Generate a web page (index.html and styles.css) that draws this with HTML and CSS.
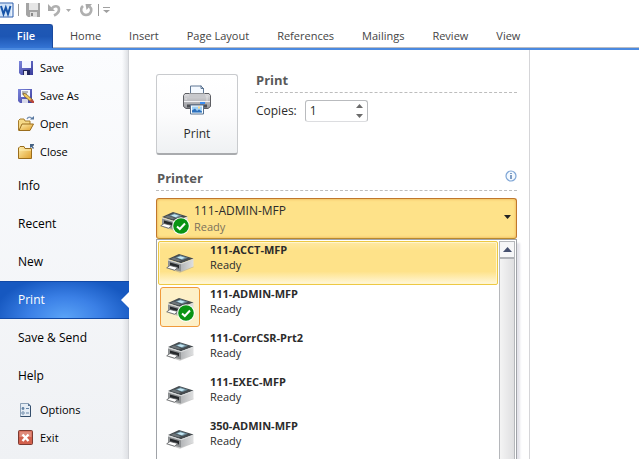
FILE: index.html
```html
<!DOCTYPE html>
<html lang="en">
<head>
<meta charset="utf-8">
<title>Print</title>
<link rel="stylesheet" href="styles.css">
</head>
<body>
<svg class="defs" aria-hidden="true">
  <defs>
    <linearGradient id="gold" x1="0" y1="0" x2="1" y2="1"><stop offset="0" stop-color="#fff0b0"/><stop offset="1" stop-color="#e0a02c"/></linearGradient>
    <linearGradient id="violet" x1="0" y1="0" x2="1" y2="1"><stop offset="0" stop-color="#7c86dc"/><stop offset="1" stop-color="#3a3c9c"/></linearGradient>
    <linearGradient id="side" x1="0" y1="0" x2="1" y2="0"><stop offset="0" stop-color="#b4b6b8"/><stop offset="1" stop-color="#dfe0e1"/></linearGradient>
    <linearGradient id="steel" x1="0" y1="0" x2="0" y2="1"><stop offset="0" stop-color="#dcdcdf"/><stop offset="1" stop-color="#96979c"/></linearGradient>
    <symbol id="device" viewBox="0 0 28 20">
      <path d="M3 16L14 19.800L28 14L25 12L5 12Z" fill="#999" opacity=".5"/>
      <path d="M2 7L15 10.500V18.500L9 17L2 13Z" fill="#8d9092"/>
      <path d="M15 10.500L27.500 6.500V13.500L15 18.500Z" fill="url(#side)"/>
      <path d="M2 6L13 1L27.500 5.500L15 10.200Z" fill="#454b4f"/>
      <path d="M4.500 6L8 4.400L15 7.200L12.500 8.300Z" fill="#6f767a"/>
      <path d="M9 4.500L14.500 2.300L22 4.800L16.500 7Z" fill="#6b8a98"/>
      <path d="M11 4.600L14.500 3.200L19 4.700L15.500 6.200Z" fill="#c3e6f3"/>
      <path d="M4 9.500L13 12V15.500L4 13Z" fill="#26292c"/>
      <path d="M.7 14.800L4 12.500L12 14.500L8.500 17.200Z" fill="#fff" stroke="#55585a" stroke-width=".8"/>
      <path d="M2 7L15 10.800L27.500 6.300" fill="none" stroke="#d8dadb" stroke-width="1"/>
    </symbol>
    <symbol id="check" viewBox="0 0 18 18">
      <circle cx="9" cy="9" r="8.800" fill="#fff"/><circle cx="9" cy="9" r="7.800" fill="#0a9414"/>
      <path d="M5 9.500L7.800 12L13 6.500" fill="none" stroke="#fff" stroke-width="2"/>
    </symbol>
  </defs>
</svg>

<header class="ribbon">
  <div class="quick">
    <svg class="word" viewBox="0 0 14 16" aria-hidden="true"><path d="M0 1H13V15H0" fill="#e9f2fc" stroke="#2a5cad"/><path d="M0 2H11V14H0Z" fill="#cfe2f8"/><path d="M1 4L3.500 12L5.800 5.500L8 12L10.500 4" fill="none" stroke="#1653a8" stroke-width="2"/></svg>
    <span class="rule"></span>
    <button class="tool save" aria-label="Save"><svg viewBox="0 0 14 14"><path d="M0 0H14V14H2L0 12Z" fill="#a4a4a4"/><path d="M3 0H12V7H3Z" fill="#e6e6e6"/><path d="M4 9H11V14H4Z" fill="#dedede"/><path d="M5 10H7V13H5Z" fill="#888"/></svg></button>
    <button class="tool undo" aria-label="Undo"><svg viewBox="0 0 14 14"><path d="M0 1V8H7Z" fill="#a9a9a9"/><path d="M3.500 6C6 2 11 2.500 11 6.500C11 9 9 11 6 12.500" fill="none" stroke="#b0b0b0" stroke-width="2.600"/></svg></button>
    <button class="tool more" aria-label="Undo history"><svg viewBox="0 0 5 3"><path d="M0 0H5L2.500 3Z" fill="#aaa"/></svg></button>
    <button class="tool redo" aria-label="Repeat"><svg viewBox="0 0 14 14"><path d="M3 3C-.5 6 1.500 12 6 12C11.500 12 12.500 6 9.500 3.500" fill="none" stroke="#b0b0b0" stroke-width="2.600"/><path d="M5.500 1H12L6.500 7Z" fill="#a9a9a9"/></svg></button>
    <span class="rule"></span>
    <button class="tool customize" aria-label="Customize toolbar"><svg viewBox="0 0 7 6"><path d="M0 0H7V1H0ZM0 3H7L3.500 6Z" fill="#a0a0a0"/></svg></button>
  </div>
  <nav class="tabs" aria-label="Ribbon">
    <a class="tab file" href="#file">File</a>
    <a class="tab" href="#home">Home</a>
    <a class="tab" href="#insert">Insert</a>
    <a class="tab" href="#layout">Page Layout</a>
    <a class="tab" href="#references">References</a>
    <a class="tab" href="#mailings">Mailings</a>
    <a class="tab" href="#review">Review</a>
    <a class="tab" href="#view">View</a>
  </nav>
</header>

<div class="backstage">
  <nav class="side" aria-label="File">
    <a class="cmd" href="#save"><svg viewBox="0 0 16 16"><path d="M1 1H15V15H3L1 13Z" fill="url(#violet)"/><path d="M4 1H13V8H4Z" fill="#f4f7ff"/><path d="M5 10H12V15H5Z" fill="#23265c"/><path d="M6 11H9V15H6Z" fill="#e8e8f0"/></svg>Save</a>
    <a class="cmd" href="#saveas"><svg viewBox="0 0 16 16"><path d="M0 1H14V15H2L0 13Z" fill="url(#violet)"/><path d="M3 2H12V9H3Z" fill="#f4f7ff"/><path d="M4 4H10M4 6H9" stroke="#777"/><path d="M4 11H10V15H4Z" fill="#d8daea"/><path d="M5 5L8 6L15 12L13 14L6 8Z" fill="#efc75b" stroke="#75592a" stroke-width=".7"/><path d="M13 11L16 13V15H14L12 13Z" fill="#b8473c"/></svg>Save As</a>
    <a class="cmd" href="#open"><svg viewBox="0 0 16 16"><path d="M.5 14.500V4.500L2 3H6L7 5H12V8" fill="#f5d987" stroke="#a67c2c"/><path d="M1 14.500L4 8H15.500L12 14.500Z" fill="url(#gold)" stroke="#9a6d1d"/><path d="M9 3C10 .5 13 .5 14 3" fill="none" stroke="#7792b5" stroke-width="1.200"/><path d="M12 3.500H16V0Z" fill="#56779f"/></svg>Open</a>
    <a class="cmd" href="#close"><svg viewBox="0 0 16 16"><path d="M.5 14.500V4L2 2.500H6L7 4.500H13.500V14.500Z" fill="url(#gold)" stroke="#9a6d1d"/><path d="M1 6H13" stroke="#fff0b4"/><path d="M12 0H16V1.500L14.500 2L16 4L15 5L13.500 3L12 4Z" fill="#466384"/></svg>Close</a>
    <a class="place first" href="#info">Info</a>
    <a class="place" href="#recent">Recent</a>
    <a class="place" href="#new">New</a>
    <a class="place current" href="#print" aria-current="page">Print</a>
    <a class="place" href="#send">Save &amp; Send</a>
    <a class="place last" href="#help">Help</a>
    <a class="cmd" href="#options"><svg viewBox="0 0 16 16"><path d="M2.500 1.500H10L12.500 4V14.500H2.500Z" fill="#e5edf5" stroke="#8ba0b6"/><path d="M12.500 4V14.500H2.500" fill="none" stroke="#344e6c"/><path d="M10 1V4H13Z" fill="#55718f"/><circle cx="5" cy="6.500" r="1.400" fill="#6484a6"/><circle cx="5" cy="11" r="1.200" fill="#fff" stroke="#6484a6"/><path d="M8 6.500H11M8 11H11" stroke="#6484a6"/></svg>Options</a>
    <a class="cmd" href="#exit"><svg viewBox="0 0 16 16"><rect x=".5" y=".5" width="14" height="14" rx="1" fill="#d2604c" stroke="#7c3a31"/><path d="M1.500 1.500H13.500V7H1.500Z" fill="#df8b7b"/><path d="M4.500 4.500L10.500 11M10.500 4.500L4.500 11" stroke="#fff" stroke-width="2.400"/></svg>Exit</a>
  </nav>

  <main class="settings">
    <section class="top">
      <button class="print">
        <svg viewBox="0 0 30 30" aria-hidden="true"><path d="M8.500 11V1.500H19L21.500 4V11Z" fill="#f4f9ff" stroke="#5f7794"/><path d="M19 1V4H22" fill="none" stroke="#5f7794"/><path d="M3 9H27L28.500 11V22L26 24H4L1.500 22V11Z" fill="url(#steel)" stroke="#5d5e63"/><path d="M7 9H23V13H7Z" fill="#c7c8cc"/><path d="M2 17H28" stroke="#f1f1f3"/><path d="M5 20H25V23H5Z" fill="#4e5055"/><path d="M18 18.500H23" stroke="#3b8cf0" stroke-width="2"/><path d="M25 12V17M4 14V16" stroke="#fff" stroke-dasharray="1 1"/><path d="M8.500 20.500H21.500V29.500H8.500Z" fill="#fff" stroke="#56708f"/><path d="M10 22H20V28H10Z" fill="#9fd0f5"/><path d="M10 28V26L13 24L15 26.500L17 25L20 27V28Z" fill="#2d70bd"/><path d="M16 22H18V24H16Z" fill="#ffd98b"/></svg>
        Print
      </button>
      <div class="job">
        <h2>Print</h2>
        <div class="copies">
          <label for="copies">Copies:</label>
          <div class="spin">
            <input id="copies" type="number" min="1" value="1">
            <div class="arrows">
              <button aria-label="More copies"><svg viewBox="0 0 7 4"><path d="M0 4H7L3.500 0Z" fill="#6b6b6b"/></svg></button>
              <button aria-label="Fewer copies"><svg viewBox="0 0 7 4"><path d="M0 0H7L3.500 4Z" fill="#6b6b6b"/></svg></button>
            </div>
          </div>
        </div>
      </div>
    </section>

    <section>
      <h2 class="printer-title"><label for="printer">Printer</label>
        <button class="info" aria-label="Printer information"><svg viewBox="0 0 12 12"><circle cx="6" cy="6" r="5" fill="#f3f9ff" stroke="#7fa6d6" stroke-width="1.200"/><path d="M6 5V9M6 3V4" stroke="#35619c" stroke-width="1.200"/></svg></button>
      </h2>
      <div class="combo">
        <select id="printer">
          <option>111-ADMIN-MFP</option><option>111-ACCT-MFP</option><option>111-CorrCSR-Prt2</option><option>111-EXEC-MFP</option><option>350-ADMIN-MFP</option>
        </select>
        <div class="face">
          <span class="icon"><svg class="device"><use href="#device"/></svg><svg class="check"><use href="#check"/></svg></span>
          <span class="state">Ready</span>
          <svg class="caret" viewBox="0 0 7 4"><path d="M0 0H7L3.500 4Z" fill="#222"/></svg>
        </div>
      </div>
      <div class="menu">
        <ul class="list" role="listbox" aria-label="Printers">
          <li class="item hover" role="option"><span class="icon"><svg class="device"><use href="#device"/></svg></span><span class="text"><b>111-ACCT-MFP</b>Ready</span></li>
          <li class="item chosen" role="option" aria-selected="true"><span class="icon"><svg class="device"><use href="#device"/></svg><svg class="check"><use href="#check"/></svg></span><span class="text"><b>111-ADMIN-MFP</b>Ready</span></li>
          <li class="item" role="option"><span class="icon"><svg class="device"><use href="#device"/></svg></span><span class="text"><b>111-CorrCSR-Prt2</b>Ready</span></li>
          <li class="item" role="option"><span class="icon"><svg class="device"><use href="#device"/></svg></span><span class="text"><b>111-EXEC-MFP</b>Ready</span></li>
          <li class="item" role="option"><span class="icon"><svg class="device"><use href="#device"/></svg></span><span class="text"><b>350-ADMIN-MFP</b>Ready</span></li>
        </ul>
        <div class="scroll">
          <button aria-label="Scroll up"><svg viewBox="0 0 9 5"><path d="M0 5H9L4.500 0Z" fill="#46506f"/></svg></button>
          <div class="thumb"></div>
        </div>
      </div>
    </section>
  </main>
  <div class="preview"></div>
</div>
</body>
</html>
```
FILE: styles.css
```css
* { box-sizing: border-box; }

body {
  margin: 0;
  height: 100vh;
  overflow: hidden;
  display: flex;
  flex-direction: column;
  background: #fff;
  color: #2b2b2b;
  font: 12px/16px "Open Sans", "Noto Sans", sans-serif;
}

a { color: inherit; text-decoration: none; }
button, input, select { font: inherit; color: inherit; margin: 0; }
button { border: 0; padding: 0; background: none; }
svg { display: block; }
h2 { margin: 0; font-size: 13px; line-height: 16px; color: #5a5a5a; }
.defs { position: absolute; width: 0; height: 0; }

.quick { display: flex; align-items: center; height: 20px; }
.word { width: 14px; height: 16px; }
.rule { width: 1px; height: 12px; margin-left: 4px; background: #999; }
.tool svg { width: 14px; height: 14px; }
.save { margin-left: 7px; }
.undo { margin-left: 8px; }
.more { margin-left: 4px; }
.more svg { width: 5px; height: 3px; }
.redo { margin-left: 9px; }
.customize { margin-left: 4px; }
.customize svg { width: 7px; height: 6px; }

.tabs {
  display: flex;
  height: 30px;
  padding-top: 4px;
  border-bottom: 2px solid #4b8ae0;
  box-shadow: inset 0 -1px #b9bcc2;
}
.tab { padding: 0 14px; font-size: 11px; line-height: 24px; color: #444; }
.file {
  width: 53px;
  margin-right: 3px;
  padding: 0;
  text-align: center;
  color: #fff;
  font-weight: 600;
  border: 1px solid #1a4a9f;
  border-width: 1px 1px 0 0;
  border-radius: 0 3px 0 0;
  line-height: 22px;
  background: linear-gradient(#2058b4, #1d56b4 50%, #3474d4);
}

.backstage { flex: 1; min-height: 0; display: grid; grid-template-columns: 129px 401px 1fr; }

.side {
  padding-top: 4px;
  color: #000;
  background: linear-gradient(90deg, transparent 122px, #dfe1e5), linear-gradient(#fbfcfe, #eff1f4);
  border-right: 1px solid #cfd1d5;
}
.cmd { display: flex; align-items: center; gap: 6px; height: 28px; padding-left: 18px; font-size: 11px; }
.cmd svg { width: 16px; height: 16px; }
.place { display: flex; align-items: center; height: 38px; padding-left: 18px; }
.first { margin-top: 1px; }
.last { margin-bottom: 1px; }
.current {
  position: relative;
  margin-right: -1px;
  color: #fff;
  border: 1px solid #1149a6;
  border-width: 1px 0;
  background: radial-gradient(ellipse 72px 42px at 50% 100%, #5aa3f7, #3b80e6 50%, #1658c0);
}
.current::after {
  content: "";
  position: absolute;
  right: 0;
  top: 10px;
  border: 8px solid transparent;
  border-right-color: #fff;
  border-left: 0;
}

.settings { padding: 24px 12px 0 27px; border-right: 1px solid #d5d5d8; }
.top { display: flex; gap: 17px; }
.print {
  width: 82px;
  height: 81px;
  display: flex;
  flex-direction: column;
  align-items: center;
  gap: 11px;
  padding-top: 9px;
  border: 1px solid #c9cbce;
  border-bottom: 2px solid #a9abae;
  border-radius: 3px;
  background: linear-gradient(#fff, #fcfcfd 50%, #eff1f3);
}
.print svg { width: 30px; height: 31px; }
.job { flex: 1; }
.job h2, .printer-title { padding: 0 0 4px 1px; border-bottom: 1px dashed #bdbdbd; }
.job h2 { margin-top: -2px; }
.copies { display: flex; align-items: center; gap: 8px; margin-top: 7px; padding-left: 1px; }
.spin { display: flex; width: 63px; height: 22px; border: 1px solid #b9bbbe; border-bottom-color: #dcdde0; border-radius: 3px; background: #fff; }
.spin input { width: 44px; padding: 0 4px; border: 0; outline: 0; background: none; appearance: textfield; }
.spin input::-webkit-inner-spin-button { appearance: none; }
.arrows { display: flex; flex-direction: column; justify-content: center; gap: 6px; padding-left: 6px; }
.arrows svg { width: 7px; height: 4px; }

.printer-title { display: flex; align-items: flex-start; justify-content: space-between; margin-top: 15px; }
.info svg { width: 12px; height: 12px; }

.combo { display: grid; margin-top: 7px; }
.combo select, .face { grid-area: 1 / 1; }
.combo select {
  height: 41px;
  padding: 0 20px 16px 37px;
  appearance: none;
  border: 1px solid #c0772c;
  border-bottom-color: #b98a2f;
  border-radius: 3px;
  background: #fee289;
  box-shadow: inset 0 0 3px #e9a94b;
}
.face { display: flex; align-items: flex-end; padding: 0 6px 4px 4px; pointer-events: none; }
.icon { display: grid; flex: none; width: 40px; height: 40px; place-items: center; }
.icon svg { grid-area: 1 / 1; }
.device { width: 28px; height: 20px; }
.check { width: 18px; height: 18px; place-self: end; }
.face .icon { width: 30px; height: 24px; }
.face .device { place-self: start; }
.state { flex: 1; margin-left: 4px; font-size: 11px; color: #7c715b; }
.caret { width: 7px; height: 4px; align-self: center; }

.menu { display: flex; padding: 1px 1px 0; border: 1px solid #a0a3a8; border-bottom: 0; box-shadow: 3px 4px 2px #e4e3ea; background: #fff; }
.list { flex: 1; margin: 0; padding: 0; list-style: none; }
.item { display: flex; height: 44px; padding: 1px; gap: 10px; font-size: 11px; line-height: 15px; }
.item .icon { margin: 1px 0 0 1px; }
.text { display: flex; flex-direction: column; }
.text b { font-weight: 700; }
.hover { border: 1px solid #edc944; border-radius: 2px; padding: 0; background: linear-gradient(#fee9a4, #fee289 20%, #fee289 70%, #fff7da); box-shadow: inset 0 0 0 1px #fff5d0; }
.chosen .icon { border: 1px solid #f09a3c; border-radius: 3px; background: #fdf0c8; }
.chosen .check { margin: 0 4px 4px 0; }
.scroll { width: 16px; margin-left: 1px; display: flex; flex-direction: column; border: 1px solid #b5b7bb; background: #eee; }
.scroll button { height: 17px; display: grid; place-items: center; border-bottom: 2px solid #b0b2b7; background: #f6f6f7; }
.scroll svg { width: 9px; height: 5px; }
.thumb { flex: 1; background: linear-gradient(90deg, #f4f4f4, #dfdfe1); }
```
